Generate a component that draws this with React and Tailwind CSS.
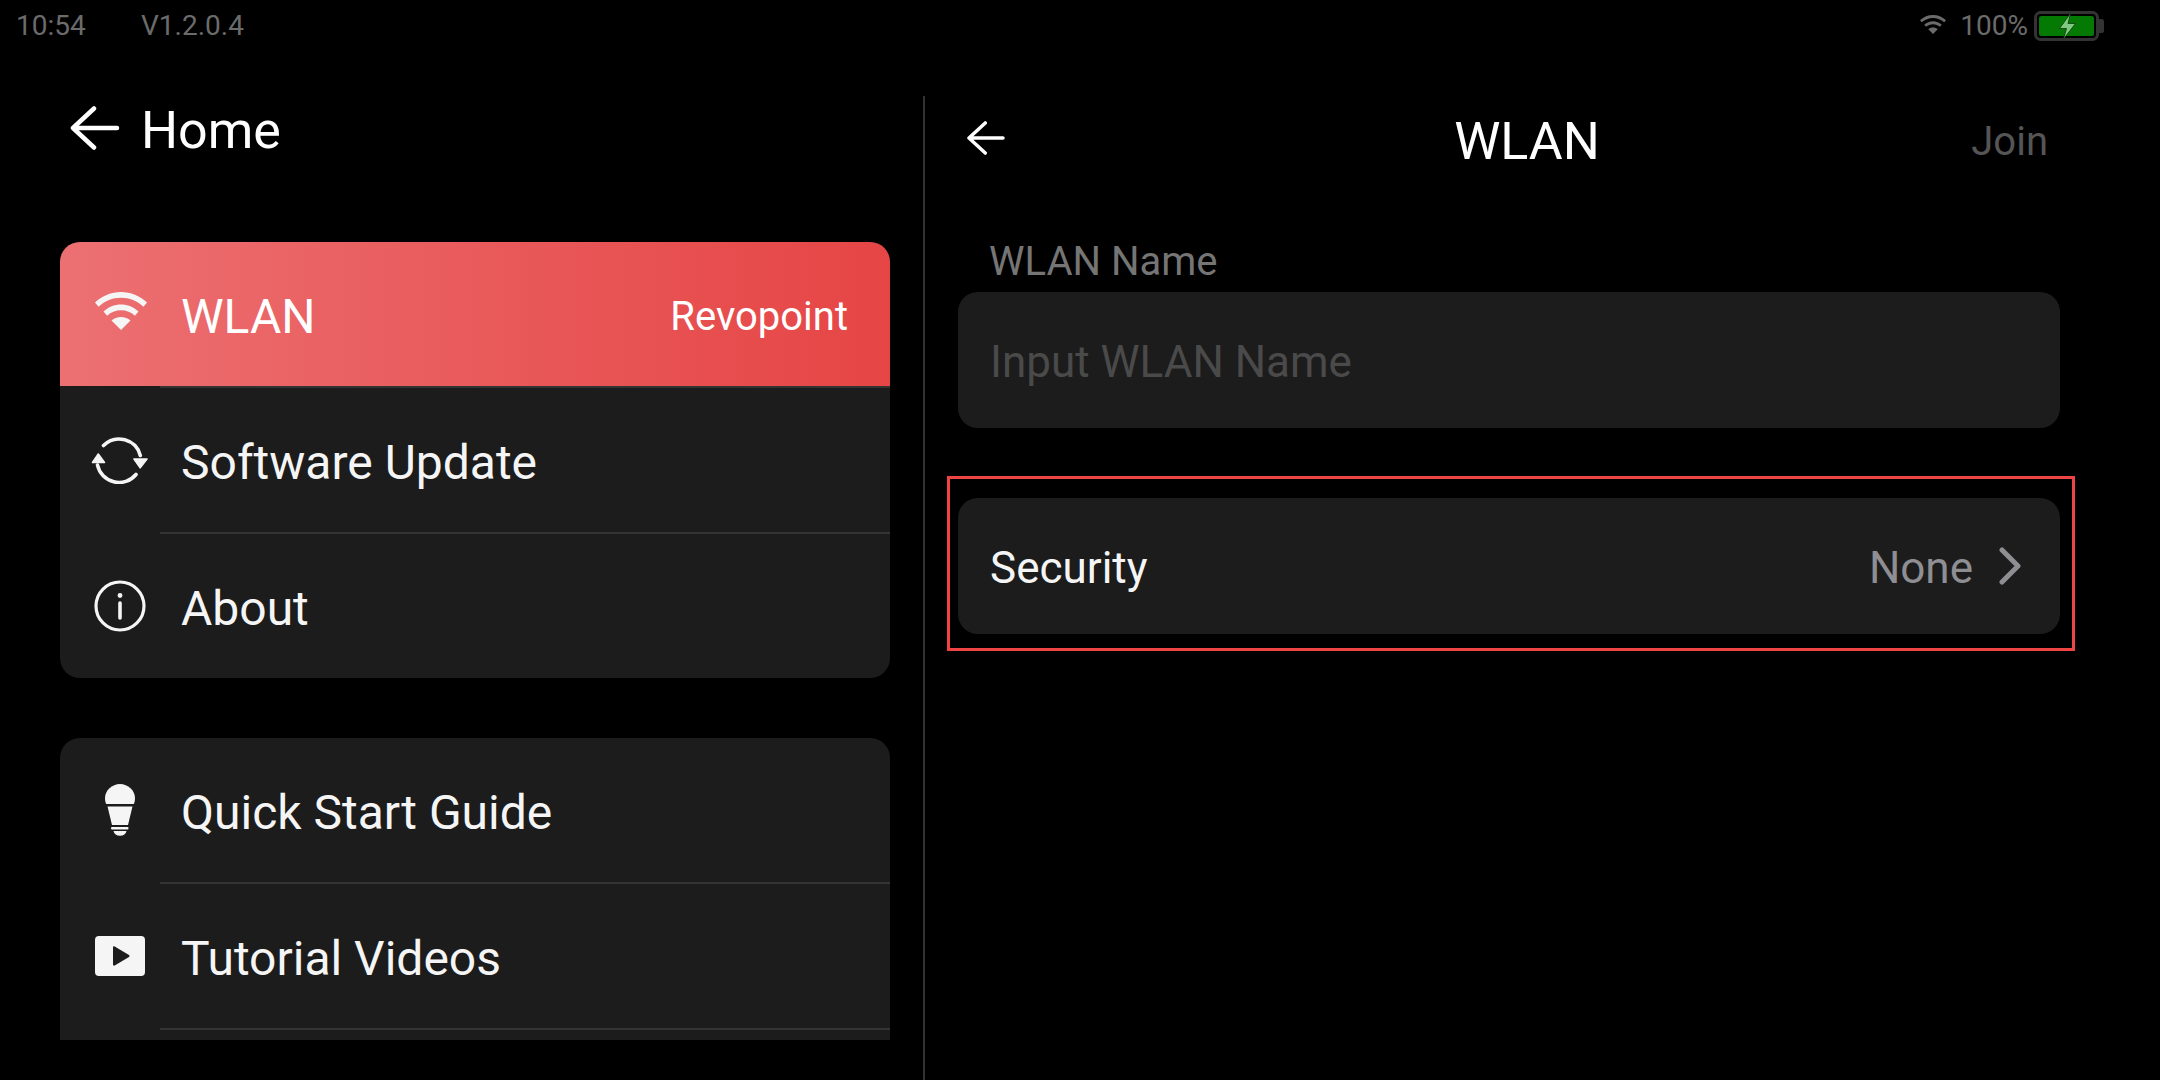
import { Children } from "react";

const FONT = "font-['Roboto','Liberation_Sans',sans-serif]";

function BackArrow({ className }) {
  return (
    <svg viewBox="0 0 50 44" className={className} fill="none" stroke="currentColor" strokeWidth="4.5" strokeLinecap="round" strokeLinejoin="round">
      <path d="M47 22H3M24 2.5 3 22l21 19.5" />
    </svg>
  );
}

function WifiIcon({ className }) {
  return (
    <svg viewBox="0 0 52 38" className={className} fill="currentColor">
      <path d="M26 0C16 0 7.500 3.600 0 10.500l3.500 4.200C10 9 17.500 5.800 26 5.800s16 3.200 22.500 8.900l3.500-4.200C44.500 3.600 36 0 26 0Z" />
      <path d="M26 12.500c-6.700 0-12.500 2.400-17.500 7l3.600 4.200C16 20.200 20.600 18.300 26 18.300s10 1.900 13.900 5.400l3.600-4.200c-5-4.600-10.800-7-17.500-7Z" />
      <path d="M26 25c-3.700 0-7 1.300-9.500 3.600L26 38l9.500-9.400C33 26.300 29.700 25 26 25Z" />
    </svg>
  );
}

function SyncIcon({ className }) {
  return (
    <svg viewBox="0 0 58 48" className={className} fill="none" stroke="currentColor" strokeWidth="3.600" strokeLinecap="round">
      <path d="M12.500 9.500A22 22 0 0 1 49.300 19.500" />
      <path d="M6.500 29A22 22 0 0 0 45 38.500" />
      <path d="M7.300 18 1.500 26.500h12Z" fill="currentColor" strokeWidth="1.600" strokeLinejoin="round" />
      <path d="M43 23h13l-6.800 8.800Z" fill="currentColor" strokeWidth="1.600" strokeLinejoin="round" />
    </svg>
  );
}

function InfoIcon({ className }) {
  return (
    <svg viewBox="0 0 52 52" className={className} fill="none" stroke="currentColor">
      <circle cx="26" cy="26" r="24" strokeWidth="3.200" />
      <path d="M26 23v15" strokeWidth="3.600" strokeLinecap="round" />
      <circle cx="26" cy="15.500" r="2.400" fill="currentColor" stroke="none" />
    </svg>
  );
}

function BulbIcon({ className }) {
  return (
    <svg viewBox="0 0 32 52" className={className} fill="currentColor">
      <path d="M16 0C8 0 1 6.500 1 14c0 2.500.5 4.500 1.200 6h27.600c.7-1.500 1.200-3.500 1.200-6C31 6.500 24 0 16 0Z" />
      <path d="M3.500 22.500h25L24 41H8Z" />
      <rect x="7" y="43" width="17.500" height="2.500" rx="1" />
      <path d="M9.500 47h13c-.5 3-3 4.800-6.500 4.800S10 50 9.500 47Z" />
    </svg>
  );
}

function PlayIcon({ className }) {
  return (
    <svg viewBox="0 0 50 40" className={className}>
      <rect width="50" height="40" rx="4" fill="currentColor" />
      <path d="M18 11.500c0-.9.900-1.400 1.700-1l14.300 8.500c.7.500.7 1.500 0 2l-14.300 8.500c-.8.400-1.700-.1-1.700-1Z" fill="#1c1c1c" />
    </svg>
  );
}

function Battery() {
  return (
    <svg viewBox="0 0 70 30" className="w-[70px] h-[30px]">
      <rect x="1.500" y="1.500" width="62" height="27" rx="5" fill="none" stroke="#333" strokeWidth="3" />
      <path d="M65 8h2.500a2.500 2.500 0 0 1 2.500 2.500v9a2.500 2.500 0 0 1-2.500 2.500H65Z" fill="#333" />
      <rect x="5" y="5" width="55" height="20" rx="2.500" fill="#047a04" />
      <path d="M36.500 2.500 25.500 17.500h7l-3 10.500 12-15.500h-7.500Z" fill="#80c980" stroke="#0a3a0a" strokeWidth="0.800" />
    </svg>
  );
}

function StatusBar() {
  return (
    <div className="h-[50px] shrink-0 flex items-center pt-[2px] pl-[16px] pr-[56px] text-[28px] text-[#6b6b6b]">
      <span className="w-[71px]">10:54</span>
      <span className="ml-[54px]">V1.2.0.4</span>
      <div className="ml-auto flex items-center">
        <WifiIcon className="w-[26px] h-[19px] mb-[4px]" />
        <span className="ml-[14px] mr-[6px]">100%</span>
        <Battery />
      </div>
    </div>
  );
}

function MenuRow({ icon, label, value, active, last }) {
  return (
    <>
      <div className={`h-[144px] flex items-center pl-[30px] pr-[42px] ${active ? "bg-linear-to-r/srgb from-[#ec7072] to-[#e64545]" : ""}`}>
        <div className="w-[60px] flex justify-center text-[#f5f5f5]">{icon}</div>
        <span className={`ml-[31px] mt-[5px] text-[48px] ${active ? "text-white" : "text-[#f5f5f5]"}`}>{label}</span>
        {value && <span className="ml-auto mt-[5px] text-[40px] text-white">{value}</span>}
      </div>
      {!last && <div className="ml-[100px] h-[2px] bg-[#333]" />}
    </>
  );
}

function Card({ children }) {
  return <div className="shrink-0 bg-[#1c1c1c] rounded-[20px] overflow-hidden">{Children.toArray(children)}</div>;
}

function LeftPane() {
  return (
    <div className="w-[923px] shrink-0 pl-[60px] pr-[33px] flex flex-col">
      <div className="h-[192px] flex items-start pt-[54px] pl-[10px] text-white">
        <BackArrow className="w-[50px] h-[44px] mt-[2px]" />
        <span className="ml-[21px] text-[52px] leading-[54px]">Home</span>
      </div>
      <div className="h-[798px] overflow-hidden flex flex-col gap-[60px]">
        <Card>
          <MenuRow active icon={<WifiIcon className="w-[52px] h-[38px] mb-[6px] ml-[2px]" />} label="WLAN" value="Revopoint" />
          <MenuRow icon={<SyncIcon className="w-[58px] h-[48px]" />} label="Software Update" />
          <MenuRow last icon={<InfoIcon className="w-[52px] h-[52px]" />} label="About" />
        </Card>
        <Card>
          <MenuRow icon={<BulbIcon className="w-[32px] h-[52px]" />} label="Quick Start Guide" />
          <MenuRow icon={<PlayIcon className="w-[50px] h-[40px]" />} label="Tutorial Videos" />
          <div className="h-[146px]" />
        </Card>
      </div>
    </div>
  );
}

function RightPane() {
  return (
    <div className="flex-1 border-l-2 border-[#333] mt-[46px] pl-[33px] pr-[100px] flex flex-col">
      <div className="relative h-[88px] mt-[2px] flex items-center justify-center pl-[36px] text-white">
        <BackArrow className="absolute left-[8px] top-[23px] w-[40px] h-[34px]" />
        <span className="text-[52px]">WLAN</span>
        <span className="absolute right-[12px] text-[40px] text-[#555]">Join</span>
      </div>
      <label className="mt-[46px] pl-[31px] text-[40px] leading-[60px] text-[#757575]">WLAN Name</label>
      <div className="h-[136px] rounded-[20px] bg-[#1c1c1c] flex items-center px-[32px] pt-[4px] text-[44px] text-[#4a4a4a]">
        Input WLAN Name
      </div>
      <div className="mt-[48px] ml-[-11px] mr-[-15px] border-[3px] border-[#ef4444] pl-[8px] pr-[12px] pt-[19px] pb-[14px]">
        <div className="h-[136px] rounded-[20px] bg-[#1c1c1c] flex items-center pl-[32px] pr-[39px]">
          <span className="mt-[4px] text-[44px] text-[#f5f5f5]">Security</span>
          <span className="ml-auto mt-[4px] text-[44px] text-[#8e8e93]">None</span>
          <svg viewBox="0 0 22 38" className="ml-[26px] w-[22px] h-[38px]" fill="none" stroke="#8e8e93" strokeWidth="5" strokeLinecap="round" strokeLinejoin="round">
            <path d="M3 3l16 16L3 35" />
          </svg>
        </div>
      </div>
    </div>
  );
}

export default function App() {
  return (
    <div className={`w-[2160px] h-[1080px] overflow-hidden bg-black flex flex-col ${FONT}`}>
      <StatusBar />
      <div className="flex flex-1 min-h-0">
        <LeftPane />
        <RightPane />
      </div>
    </div>
  );
}
